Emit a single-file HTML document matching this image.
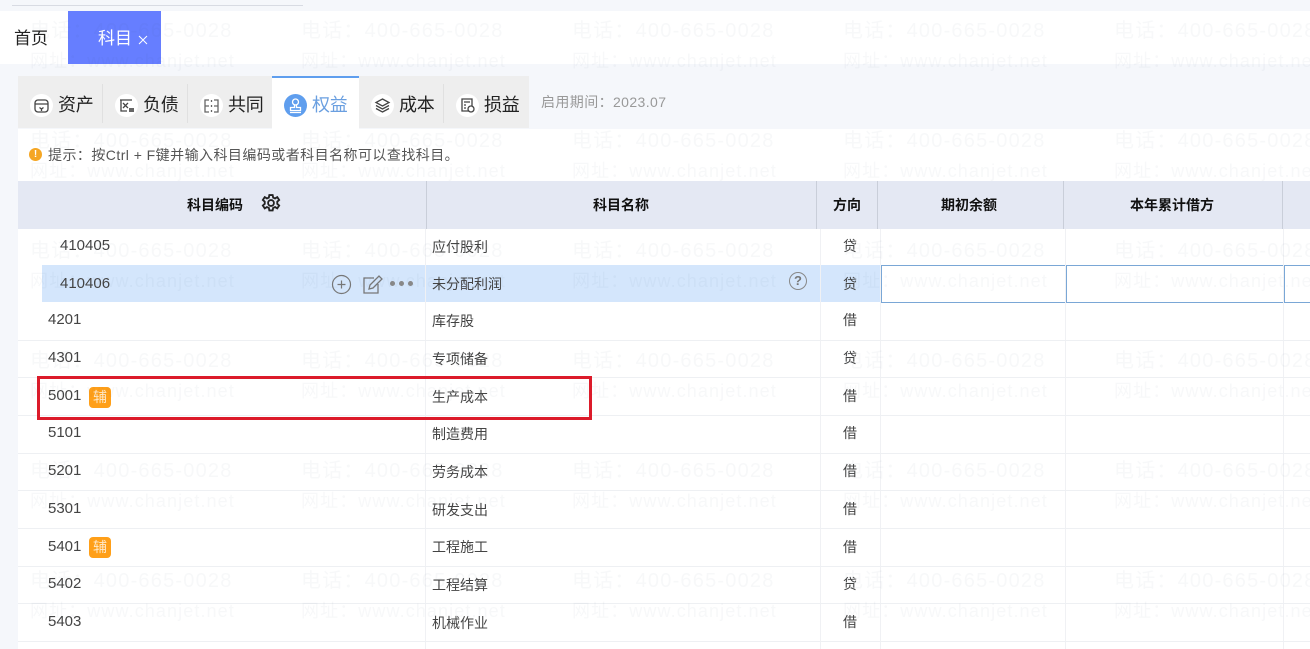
<!DOCTYPE html>
<html lang="zh"><head><meta charset="utf-8">
<style>
html,body{margin:0;padding:0}
body{width:1310px;height:649px;overflow:hidden;position:relative;background:#f5f7fb;font-family:"Liberation Sans","Noto Sans CJK SC",sans-serif;color:#333}
.a{position:absolute;white-space:nowrap}
.t{font-size:14px;line-height:18px;color:#444}
.c{font-size:15px;line-height:18px;color:#444}
.h{font-size:14px;font-weight:700;line-height:19px;color:#111;top:196px}
.lab{font-size:18px;line-height:24px;top:93px;color:#222;letter-spacing:-.3px}
.ic{position:absolute;width:23px;height:23px;border-radius:50%;background:#fff;top:94px}
.ic svg{position:absolute;left:0;top:0;width:23px;height:23px;fill:none;stroke:#444;stroke-width:1.3}
.wm{position:absolute;white-space:nowrap;font-size:20px;line-height:24px;color:rgba(60,70,90,.04);letter-spacing:1.2px;pointer-events:none}
.u{font-size:18px;letter-spacing:1.1px}
.hl{position:absolute;left:18px;width:1292px;height:1px;background:#eef0f3}
.vl{position:absolute;top:229px;height:420px;width:1px;background:#f0f1f4}
.hd{position:absolute;top:181px;height:48px;width:1px;background:#c9ced9}
.badge{position:absolute;left:89px;width:22px;height:21px;border-radius:4px;background:#ff9f18;color:#ffe9c9;font-size:14px;line-height:21px;text-align:center}
.cell{position:absolute;top:265px;height:36px;border:1px solid #7aa7d6;box-sizing:content-box}
</style></head><body>
<div class="a" style="left:0;top:11px;width:1310px;height:53px;background:#fff"></div>
<div class="a" style="left:12px;top:5px;width:291px;height:1px;background:#d8dbe3"></div>
<div class="a" style="left:14px;top:27px;font-size:17px;line-height:24px;color:#222">首页</div>
<div class="a" style="left:68px;top:11px;width:93px;height:53px;background:#667eff"></div>
<div class="a" style="left:98px;top:27px;font-size:17px;line-height:24px;color:#fff">科目</div>
<svg class="a" style="left:138px;top:35px" width="10" height="10" viewBox="0 0 10 10" stroke="#fff" stroke-width="1"><path d="M1 1l8 8M9 1l-8 8"/></svg>

<!-- tabs -->
<div class="a" style="left:18px;top:76px;width:254px;height:52px;background:#eeeeee"></div>
<div class="a" style="left:272px;top:76px;width:87px;height:53px;background:#fff;border-top:2px solid #5f9eee;box-sizing:border-box"></div>
<div class="a" style="left:359px;top:76px;width:170px;height:52px;background:#eeeeee"></div>
<div class="a" style="left:102px;top:84px;width:1px;height:39px;background:#e0e0e0"></div>
<div class="a" style="left:187px;top:84px;width:1px;height:39px;background:#e0e0e0"></div>
<div class="a" style="left:443px;top:84px;width:1px;height:39px;background:#e0e0e0"></div>

<div class="ic" style="left:30px"><svg viewBox="0 0 23 23"><rect x="5" y="6" width="13" height="12" rx="3"/><path d="M5 10h13M9.500 13.500l2 1.500 2-1.500M11.500 15v2"/></svg></div>
<div class="a lab" style="left:58px">资产</div>
<div class="ic" style="left:115px"><svg viewBox="0 0 23 23"><path d="M5 6h12M6 6v11h6M8 9l5 5M13 9l-5 5"/><rect x="14" y="14" width="5" height="4" fill="#666" stroke="none"/></svg></div>
<div class="a lab" style="left:143px">负债</div>
<div class="ic" style="left:200px"><svg viewBox="0 0 23 23" style="stroke:#666"><path d="M9 6H5v12h4M14 6h4v12h-4M5 12h4M14 12h4M11.500 6v2M11.500 11v2M11.500 16v2"/></svg></div>
<div class="a lab" style="left:228px">共同</div>
<div class="ic" style="left:284px;background:#5f9eee"><svg viewBox="0 0 23 23" style="stroke:#fff"><circle cx="11.500" cy="8" r="3"/><path d="M10.500 11v2.500H6.500v3h10v-3h-4V11M6 18.500h11"/></svg></div>
<div class="a lab" style="left:312px;color:#6a9fe0">权益</div>
<div class="ic" style="left:371px"><svg viewBox="0 0 23 23"><path d="M11.500 5l6.500 3.500-6.500 3.500L5 8.500zM5 11.500l6.500 3.500 6.500-3.500M5 14.500l6.500 3.500 6.500-3.500"/></svg></div>
<div class="a lab" style="left:399px">成本</div>
<div class="ic" style="left:456px"><svg viewBox="0 0 23 23"><path d="M13 17H6V5h10v7M8 8h6M8 11h2M8 14h2"/><circle cx="15" cy="15" r="3"/></svg></div>
<div class="a lab" style="left:484px">损益</div>
<div class="a" style="left:541px;top:93px;font-size:14px;line-height:18px;color:#999;letter-spacing:.4px">启用期间：2023.07</div>

<!-- content -->
<div class="a" style="left:18px;top:129px;width:1292px;height:520px;background:#fff"></div>
<div class="a" style="left:29px;top:148px;width:13px;height:13px;border-radius:50%;background:#f5a623;color:#fff;font-size:10px;line-height:13px;text-align:center;font-weight:700">!</div>
<div class="a" style="left:48px;top:146px;font-size:14px;line-height:18px;color:#555;letter-spacing:.45px">提示：按Ctrl + F键并输入科目编码或者科目名称可以查找科目。</div>

<!-- header -->
<div class="a" style="left:18px;top:181px;width:1292px;height:48px;background:#e4e8f3"></div>
<div class="hd" style="left:426px"></div><div class="hd" style="left:816px"></div><div class="hd" style="left:877px"></div><div class="hd" style="left:1063px"></div><div class="hd" style="left:1282px"></div>
<div class="a h" style="left:187px">科目编码</div>
<svg class="a" style="left:261px;top:193px" width="20" height="20" viewBox="0 0 24 24" fill="none" stroke="#222" stroke-width="2.200"><circle cx="12" cy="12" r="3.500"/><path d="M10 2.500h4l.6 3 2.300 1 2.600-1.600 2.300 3.500-2.300 2 0 2.600 2.300 2-2.300 3.500-2.600-1.600-2.300 1-.6 3h-4l-.6-3-2.300-1-2.600 1.600-2.300-3.500 2.300-2 0-2.600-2.300-2 2.300-3.500 2.600 1.600 2.300-1z"/></svg>
<div class="a h" style="left:593px">科目名称</div>
<div class="a h" style="left:833px">方向</div>
<div class="a h" style="left:941px">期初余额</div>
<div class="a h" style="left:1130px">本年累计借方</div>

<!-- highlighted row -->
<div class="a" style="left:42px;top:265px;width:839px;height:37px;background:#d4e6fc"></div>
<div class="cell" style="left:881px;width:183px"></div>
<div class="cell" style="left:1065px;width:217px;border-left-width:2px"></div>
<div class="cell" style="left:1283px;width:40px;border-left-width:2px"></div>

<!-- grid -->
<div class="vl" style="left:425px"></div><div class="vl" style="left:820px"></div><div class="vl" style="left:880px"></div><div class="vl" style="left:1065px"></div><div class="vl" style="left:1283px"></div>
<div class="hl" style="top:340px"></div><div class="hl" style="top:377px"></div><div class="hl" style="top:415px"></div><div class="hl" style="top:453px"></div><div class="hl" style="top:490px"></div><div class="hl" style="top:528px"></div><div class="hl" style="top:566px"></div><div class="hl" style="top:603px"></div><div class="hl" style="top:641px"></div>

<!-- rows -->
<div class="a c" style="left:60px;top:237px">410405</div><div class="a t" style="left:432px;top:238px">应付股利</div><div class="a t" style="left:843px;top:237px">贷</div>
<div class="a c" style="left:60px;top:275px">410406</div><div class="a t" style="left:432px;top:275px">未分配利润</div><div class="a t" style="left:843px;top:275px">贷</div>
<div class="a c" style="left:48px;top:311px">4201</div><div class="a t" style="left:432px;top:312px">库存股</div><div class="a t" style="left:843px;top:311px">借</div>
<div class="a c" style="left:48px;top:349px">4301</div><div class="a t" style="left:432px;top:350px">专项储备</div><div class="a t" style="left:843px;top:349px">贷</div>
<div class="a c" style="left:48px;top:387px">5001</div><div class="badge" style="top:387px">辅</div><div class="a t" style="left:432px;top:388px">生产成本</div><div class="a t" style="left:843px;top:387px">借</div>
<div class="a c" style="left:48px;top:424px">5101</div><div class="a t" style="left:432px;top:425px">制造费用</div><div class="a t" style="left:843px;top:424px">借</div>
<div class="a c" style="left:48px;top:462px">5201</div><div class="a t" style="left:432px;top:463px">劳务成本</div><div class="a t" style="left:843px;top:462px">借</div>
<div class="a c" style="left:48px;top:500px">5301</div><div class="a t" style="left:432px;top:501px">研发支出</div><div class="a t" style="left:843px;top:500px">借</div>
<div class="a c" style="left:48px;top:538px">5401</div><div class="badge" style="top:537px">辅</div><div class="a t" style="left:432px;top:538px">工程施工</div><div class="a t" style="left:843px;top:538px">借</div>
<div class="a c" style="left:48px;top:575px">5402</div><div class="a t" style="left:432px;top:576px">工程结算</div><div class="a t" style="left:843px;top:575px">贷</div>
<div class="a c" style="left:48px;top:613px">5403</div><div class="a t" style="left:432px;top:614px">机械作业</div><div class="a t" style="left:843px;top:613px">借</div>

<!-- row action icons -->
<svg class="a" style="left:331px;top:274px" width="21" height="21" viewBox="0 0 21 21" fill="none" stroke="#777" stroke-width="1.200"><circle cx="10.500" cy="10.500" r="9"/><path d="M10.500 6.500v8M6.500 10.500h8"/></svg>
<svg class="a" style="left:362px;top:274px" width="21" height="21" viewBox="0 0 21 21" fill="none" stroke="#777" stroke-width="1.300"><path d="M16 10v9H2V4h10"/><path d="M7 15l1-4 9-9 3 3-9 9z"/></svg>
<div class="a" style="left:390px;top:281px;width:5px;height:5px;border-radius:50%;background:#888"></div>
<div class="a" style="left:399px;top:281px;width:5px;height:5px;border-radius:50%;background:#888"></div>
<div class="a" style="left:408px;top:281px;width:5px;height:5px;border-radius:50%;background:#888"></div>
<div class="a" style="left:789px;top:272px;width:16px;height:16px;border:1.500px solid #888;border-radius:50%;color:#777;font-size:13px;line-height:16px;text-align:center;font-weight:700">?</div>

<!-- red box -->
<div class="a" style="left:37px;top:376px;width:555px;height:44px;border:3px solid #dc1b2a;box-sizing:border-box"></div>

<!-- watermark -->
<div class="wm" style="left:30px;top:19px">电话：400-665-0028</div><div class="wm" style="left:301px;top:19px">电话：400-665-0028</div><div class="wm" style="left:572px;top:19px">电话：400-665-0028</div><div class="wm" style="left:843px;top:19px">电话：400-665-0028</div><div class="wm" style="left:1114px;top:19px">电话：400-665-0028</div>
<div class="wm u" style="left:30px;top:49px">网址：www.chanjet.net</div><div class="wm u" style="left:301px;top:49px">网址：www.chanjet.net</div><div class="wm u" style="left:572px;top:49px">网址：www.chanjet.net</div><div class="wm u" style="left:843px;top:49px">网址：www.chanjet.net</div><div class="wm u" style="left:1114px;top:49px">网址：www.chanjet.net</div>
<div class="wm" style="left:30px;top:129px">电话：400-665-0028</div><div class="wm" style="left:301px;top:129px">电话：400-665-0028</div><div class="wm" style="left:572px;top:129px">电话：400-665-0028</div><div class="wm" style="left:843px;top:129px">电话：400-665-0028</div><div class="wm" style="left:1114px;top:129px">电话：400-665-0028</div>
<div class="wm u" style="left:30px;top:159px">网址：www.chanjet.net</div><div class="wm u" style="left:301px;top:159px">网址：www.chanjet.net</div><div class="wm u" style="left:572px;top:159px">网址：www.chanjet.net</div><div class="wm u" style="left:843px;top:159px">网址：www.chanjet.net</div><div class="wm u" style="left:1114px;top:159px">网址：www.chanjet.net</div>
<div class="wm" style="left:30px;top:239px">电话：400-665-0028</div><div class="wm" style="left:301px;top:239px">电话：400-665-0028</div><div class="wm" style="left:572px;top:239px">电话：400-665-0028</div><div class="wm" style="left:843px;top:239px">电话：400-665-0028</div><div class="wm" style="left:1114px;top:239px">电话：400-665-0028</div>
<div class="wm u" style="left:30px;top:269px">网址：www.chanjet.net</div><div class="wm u" style="left:301px;top:269px">网址：www.chanjet.net</div><div class="wm u" style="left:572px;top:269px">网址：www.chanjet.net</div><div class="wm u" style="left:843px;top:269px">网址：www.chanjet.net</div><div class="wm u" style="left:1114px;top:269px">网址：www.chanjet.net</div>
<div class="wm" style="left:30px;top:349px">电话：400-665-0028</div><div class="wm" style="left:301px;top:349px">电话：400-665-0028</div><div class="wm" style="left:572px;top:349px">电话：400-665-0028</div><div class="wm" style="left:843px;top:349px">电话：400-665-0028</div><div class="wm" style="left:1114px;top:349px">电话：400-665-0028</div>
<div class="wm u" style="left:30px;top:379px">网址：www.chanjet.net</div><div class="wm u" style="left:301px;top:379px">网址：www.chanjet.net</div><div class="wm u" style="left:572px;top:379px">网址：www.chanjet.net</div><div class="wm u" style="left:843px;top:379px">网址：www.chanjet.net</div><div class="wm u" style="left:1114px;top:379px">网址：www.chanjet.net</div>
<div class="wm" style="left:30px;top:459px">电话：400-665-0028</div><div class="wm" style="left:301px;top:459px">电话：400-665-0028</div><div class="wm" style="left:572px;top:459px">电话：400-665-0028</div><div class="wm" style="left:843px;top:459px">电话：400-665-0028</div><div class="wm" style="left:1114px;top:459px">电话：400-665-0028</div>
<div class="wm u" style="left:30px;top:489px">网址：www.chanjet.net</div><div class="wm u" style="left:301px;top:489px">网址：www.chanjet.net</div><div class="wm u" style="left:572px;top:489px">网址：www.chanjet.net</div><div class="wm u" style="left:843px;top:489px">网址：www.chanjet.net</div><div class="wm u" style="left:1114px;top:489px">网址：www.chanjet.net</div>
<div class="wm" style="left:30px;top:569px">电话：400-665-0028</div><div class="wm" style="left:301px;top:569px">电话：400-665-0028</div><div class="wm" style="left:572px;top:569px">电话：400-665-0028</div><div class="wm" style="left:843px;top:569px">电话：400-665-0028</div><div class="wm" style="left:1114px;top:569px">电话：400-665-0028</div>
<div class="wm u" style="left:30px;top:599px">网址：www.chanjet.net</div><div class="wm u" style="left:301px;top:599px">网址：www.chanjet.net</div><div class="wm u" style="left:572px;top:599px">网址：www.chanjet.net</div><div class="wm u" style="left:843px;top:599px">网址：www.chanjet.net</div><div class="wm u" style="left:1114px;top:599px">网址：www.chanjet.net</div>
</body></html>
